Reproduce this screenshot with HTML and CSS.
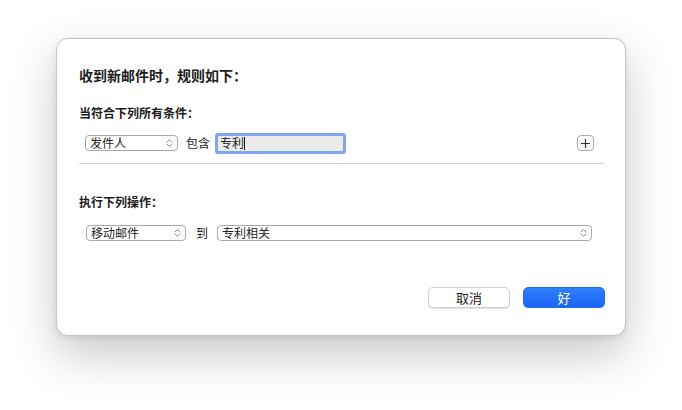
FILE: index.html
```html
<!DOCTYPE html>
<html lang="zh-CN">
<head>
<meta charset="utf-8">
<link rel="stylesheet" href="styles.css">
</head>
<body>
<div class="dialog">
  <div class="title">收到新邮件时，规则如下：</div>
  <div class="heading h-cond">当符合下列所有条件：</div>
  <div class="row row-cond">
    <div class="popup p-from"><span>发件人</span>
      <svg class="chev" width="7" height="10" viewBox="0 0 7 10"><path d="M1 4 L3.5 1.5 L6 4 M1 6 L3.5 8.5 L6 6" fill="none" stroke="#8a8a8a" stroke-width="1" stroke-linecap="round" stroke-linejoin="round"/></svg>
    </div>
    <span class="label l-contains">包含</span>
    <div class="field"><span>专利</span><span class="caret"></span></div>
    <div class="plus">
      <svg width="11" height="11" viewBox="0 0 11 11"><path d="M5.5 1 V10 M1 5.5 H10" stroke="#333" stroke-width="1.2"/></svg>
    </div>
  </div>
  <div class="sep"></div>
  <div class="heading h-act">执行下列操作：</div>
  <div class="row row-act">
    <div class="popup p-move"><span>移动邮件</span>
      <svg class="chev" width="7" height="10" viewBox="0 0 7 10"><path d="M1 4 L3.5 1.5 L6 4 M1 6 L3.5 8.5 L6 6" fill="none" stroke="#8a8a8a" stroke-width="1" stroke-linecap="round" stroke-linejoin="round"/></svg>
    </div>
    <span class="label l-to">到</span>
    <div class="popup p-dest"><span>专利相关</span>
      <svg class="chev" width="7" height="10" viewBox="0 0 7 10"><path d="M1 4 L3.5 1.5 L6 4 M1 6 L3.5 8.5 L6 6" fill="none" stroke="#8a8a8a" stroke-width="1" stroke-linecap="round" stroke-linejoin="round"/></svg>
    </div>
  </div>
  <div class="buttons">
    <div class="btn cancel">取消</div>
    <div class="btn ok">好</div>
  </div>
</div>
</body>
</html>
```
FILE: styles.css
```css
html, body {
  margin: 0;
  padding: 0;
  background: #ffffff;
}
body {
  width: 682px;
  height: 410px;
  overflow: hidden;
  font-family: "Noto Sans CJK SC", "Noto Sans", sans-serif;
  color: #222;
}
.dialog {
  box-sizing: border-box;
  margin: 38px 0 0 56px;
  width: 570px;
  height: 298px;
  background: #fff;
  border: 1px solid #c4c4c4;
  border-radius: 12px;
  box-shadow: 0 18px 46px rgba(0,0,0,0.22), 0 2px 6px rgba(0,0,0,0.08);
  padding: 26px 20px 0 22px;
  display: flex;
  flex-direction: column;
}
.title {
  font-size: 14px;
  font-weight: bold;
  line-height: 20px;
  height: 20px;
  color: #1d1d1d;
}
.heading {
  font-size: 12px;
  font-weight: bold;
  line-height: 16px;
  height: 16px;
  color: #1d1d1d;
}
.h-cond { margin-top: 20px; }
.h-act { margin-top: 30px; }
.row {
  display: flex;
  align-items: center;
}
.row-cond {
  margin-top: 12px;
  height: 20px;
  padding-left: 6px;
}
.row-act {
  margin-top: 15px;
  height: 16px;
  padding-left: 7px;
}
.popup {
  box-sizing: border-box;
  height: 16px;
  border: 1px solid #a9a9a9;
  border-radius: 4px;
  background: #fff;
  display: flex;
  align-items: center;
  justify-content: space-between;
  padding: 0 4px 0 4px;
  font-size: 12px;
  line-height: 14px;
  color: #222;
}
.popup span { margin-top: -1px; }
.chev { flex: none; }
.p-from { width: 93px; }
.p-move { width: 100px; }
.p-dest { width: 375px; margin-left: 9px; }
.label {
  font-size: 12px;
  line-height: 16px;
  color: #222;
}
.l-contains { margin-left: 8px; }
.l-to { margin-left: 10px; }
.field {
  box-sizing: border-box;
  margin-left: 8px;
  width: 125px;
  height: 15px;
  background: #ebebeb;
  border-radius: 1px;
  box-shadow: 0 0 0 3px #7ea6f2;
  display: flex;
  align-items: center;
  padding-left: 2px;
  font-size: 12px;
  line-height: 14px;
  color: #222;
}
.caret {
  display: inline-block;
  width: 1px;
  height: 13px;
  background: #111;
  margin-left: 0px;
}
.plus {
  box-sizing: border-box;
  margin-left: auto;
  margin-right: 11px;
  width: 17px;
  height: 16px;
  border: 1px solid #a9a9a9;
  border-radius: 4px;
  background: #fff;
  display: flex;
  align-items: center;
  justify-content: center;
}
.sep {
  margin-top: 10px;
  height: 1px;
  background: #d6d6d6;
}
.buttons {
  margin-top: 46px;
  display: flex;
  justify-content: flex-end;
  gap: 13px;
}
.btn {
  box-sizing: border-box;
  width: 82px;
  height: 21px;
  border-radius: 5px;
  font-size: 13px;
  line-height: 19px;
  text-align: center;
}
.cancel {
  background: #fff;
  border: 1px solid #cfcfcf;
  box-shadow: 0 1px 1px rgba(0,0,0,0.12);
  color: #222;
}
.ok {
  background: linear-gradient(#2f80fa, #1b64f6);
  border: 1px solid #1f6bf6;
  color: #fff;
}
```
